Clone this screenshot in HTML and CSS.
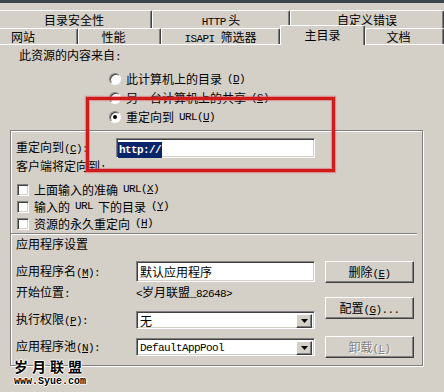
FILE: index.html
```html
<!DOCTYPE html>
<html lang="zh-CN">
  <head>
    <meta charset="UTF-8">
    <title>主目录</title>
    <link rel="stylesheet" href="styles.css">
  </head>
  <body>
    <div class="topbar"></div>

    <!-- two rows of property tabs, the front row holds the active one -->
    <div class="tabs">
      <div class="tab-row back">
        <div class="tab t-sec">目录安全性</div>
        <div class="tab t-http"><span class="en">HTTP</span> 头</div>
        <div class="tab t-err">自定义错误</div>
      </div>
      <div class="tab-row front">
        <div class="tab t-site">网站</div>
        <div class="tab t-perf">性能</div>
        <div class="tab t-isapi"><span class="en">ISAPI </span>筛选器</div>
        <div class="tab t-home active">主目录</div>
        <div class="tab t-doc">文档</div>
      </div>
    </div>

    <div class="panel">
      <div class="source">此资源的内容来自<span class="en">:</span></div>

      <div class="radios">
        <div class="radio-row"><span class="radio"></span>此计算机上的目录<span class="en">(<u>D</u>)</span></div>
        <div class="radio-row"><span class="radio"></span>另一台计算机上的共享<span class="en">(<u>S</u>)</span></div>
        <div class="radio-row"><span class="radio checked"></span>重定向到 <span class="en">URL(<u>U</u>)</span></div>
      </div>

      <div class="group">
        <div class="field-row">
          <label class="field-label">重定向到<span class="en">(<u>C</u>):</span></label>
          <div class="textbox url-box"><span class="selected en">http://</span></div>
        </div>
        <div class="note">客户端将定向到<span class="en">:</span></div>

        <div class="checks">
          <div class="check-row"><span class="checkbox"></span>上面输入的准确 <span class="en">URL(<u>X</u>)</span></div>
          <div class="check-row"><span class="checkbox"></span>输入的 <span class="en">URL</span> 下的目录<span class="en">(<u>Y</u>)</span></div>
          <div class="check-row"><span class="checkbox"></span>资源的永久重定向<span class="en">(<u>H</u>)</span></div>
        </div>

        <div class="divider"></div>
        <div class="section-title">应用程序设置</div>

        <div class="app">
          <div class="app-fields">
            <div class="app-row r-name">
              <span class="app-label">应用程序名<span class="en">(<u>M</u>):</span></span>
              <div class="textbox name-box">默认应用程序</div>
            </div>
            <div class="app-row r-start">
              <span class="app-label">开始位置<span class="en">:</span></span>
              <span class="start-path"><span class="en">&lt;</span>岁月联盟<span class="en">_82648&gt;</span></span>
            </div>
            <div class="app-row r-perm">
              <span class="app-label">执行权限<span class="en">(<u>P</u>):</span></span>
              <div class="select">
                <span class="select-text">无</span>
                <span class="arrow"><svg width="7" height="4" viewBox="0 0 7 4"><polygon points="0,0 7,0 3.5,4" fill="#000"/></svg></span>
              </div>
            </div>
            <div class="app-row r-pool">
              <span class="app-label">应用程序池<span class="en">(<u>N</u>):</span></span>
              <div class="select">
                <span class="select-text en">DefaultAppPool</span>
                <span class="arrow"><svg width="7" height="4" viewBox="0 0 7 4"><polygon points="0,0 7,0 3.5,4" fill="#000"/></svg></span>
              </div>
            </div>
          </div>

          <div class="app-buttons">
            <div class="btn">删除<span class="en">(<u>E</u>)</span></div>
            <div class="btn b-config">配置<span class="en">(<u>G</u>)...</span></div>
            <div class="btn b-unload disabled">卸载<span class="en">(<u>L</u>)</span></div>
          </div>
        </div>
      </div>
    </div>

    <!-- annotation drawn over the screenshot -->
    <div class="highlight-box"></div>

    <div class="watermark">
      <div class="wm-name">岁月联盟</div>
      <div class="wm-url">www.Syue.com</div>
    </div>
  </body>
</html>
```

FILE: styles.css
```css
* { box-sizing: border-box; }

body {
	margin: 0;
	width: 444px;
	height: 392px;
	overflow: hidden;
	position: relative;
	background-color: #D4D0C8;
	color: #000;
	font-family: "Noto Sans CJK SC", sans-serif;
	font-size: 12px;
	line-height: 16px;
}

/* SimSun style half width latin */
.en {
	font-family: "Liberation Mono", monospace;
	font-size: 11px;
	letter-spacing: -0.6px;
}

u { text-underline-offset: 1px; }

.topbar {
	height: 3px;
	background-color: #3A4550;
}

/* ---- tabs ---- */

.tabs { padding-top: 7px; }

.tab-row { display: flex; }

.back {
	height: 18px;
	margin-left: -4px;
}

.front {
	height: 16px;
	margin-left: -16px;
}

.tab {
	flex: none;
	border-top: 1px solid #fff;
	border-left: 1px solid #fff;
	border-right: 1px solid #404040;
	border-radius: 2px 2px 0 0;
	box-shadow: inset -1px 0 #808080;
	background-color: #D4D0C8;
	text-align: center;
	white-space: nowrap;
}

.back .tab {
	height: 18px;
	line-height: 16px;
	padding-top: 1px;
}

.front .tab {
	height: 16px;
	line-height: 15px;
}

.t-sec { width: 156px; }
.t-http { width: 138px; }
.t-err { flex: 1; }

.t-site { width: 94px; padding-right: 16px; }
.t-perf { width: 83px; padding-right: 12px; }
.t-isapi { width: 119px; }
.t-home { width: 85px; }
.t-doc { flex: 1; padding-right: 12px; }

.front .tab.active {
	height: 20px;
	margin-top: -3px;
	line-height: 17px;
	position: relative;
	z-index: 1;
}

/* ---- page ---- */

.panel {
	border-top: 1px solid #fff;
	padding-top: 2px;
}

.source {
	margin-left: 19px;
	line-height: 15px;
}

.radios { margin: 4px 0 0 109px; }

.radio-row {
	display: flex;
	align-items: center;
	gap: 5px;
	height: 19px;
}

.radio {
	width: 12px;
	height: 12px;
	border-radius: 50%;
	border: 1px solid;
	border-color: #808080 #fff #fff #808080;
	background-color: #fff;
	box-shadow: inset 1px 1px #404040;
	display: flex;
	align-items: center;
	justify-content: center;
}

.radio.checked::after {
	content: "";
	width: 4px;
	height: 4px;
	border-radius: 50%;
	background-color: #000;
}

.group {
	margin: 4px 0 0 10px;
	width: 413px;
	height: 236px;
	border: 1px solid #808080;
	box-shadow: inset 1px 1px #fff, 1px 1px #fff;
	padding: 7px 5px 0 5px;
}

.field-row {
	display: flex;
	align-items: center;
	height: 20px;
}

.field-label { width: 100px; }

/* sunken edit box */
.textbox,
.select {
	background-color: #fff;
	border: 1px solid;
	border-color: #808080 #fff #fff #808080;
	box-shadow: inset 1px 1px #404040, inset -1px -1px #D4D0C8;
}

.url-box {
	width: 199px;
	height: 20px;
	padding: 1px 0 0 1px;
}

.selected {
	display: inline-block;
	height: 16px;
	line-height: 16px;
	padding: 0 1px;
	background-color: #0A246A;
	color: #fff;
	font-weight: bold;
}

.note { line-height: 16px; }

.checks { margin-top: 5px; }

.check-row {
	display: flex;
	align-items: center;
	gap: 5px;
	height: 17px;
	line-height: 17px;
	padding-left: 1px;
}

.checkbox {
	width: 12px;
	height: 12px;
	background-color: #fff;
	border: 1px solid;
	border-color: #808080 #fff #fff #808080;
	box-shadow: inset 1px 1px #404040, inset -1px -1px #D4D0C8;
}

.divider {
	margin: 1px 0 0 -5px;
	border-top: 1px solid #808080;
	border-bottom: 1px solid #fff;
}

.section-title { line-height: 18px; }

.app {
	display: flex;
	margin-top: 8px;
}

.app-fields {
	display: flex;
	flex-direction: column;
}

.app-row {
	display: flex;
	align-items: center;
}

.app-label { width: 120px; }

.r-name { height: 21px; }
.r-start { height: 16px; margin-top: 3px; }
.r-perm { height: 18px; margin-top: 10px; }
.r-pool { height: 18px; margin-top: 9px; }

.name-box {
	width: 179px;
	height: 21px;
	padding: 1px 0 0 3px;
	line-height: 17px;
}

.select {
	width: 179px;
	height: 18px;
	display: flex;
	padding: 2px 2px 2px 3px;
}

.select-text {
	flex: 1;
	line-height: 14px;
}

.arrow {
	width: 16px;
	height: 14px;
	background-color: #D4D0C8;
	border: 1px solid;
	border-color: #fff #404040 #404040 #fff;
	box-shadow: inset -1px -1px #808080;
	display: flex;
	align-items: center;
	justify-content: center;
}

.app-buttons {
	display: flex;
	flex-direction: column;
	margin-left: 10px;
}

.btn {
	width: 89px;
	height: 22px;
	line-height: 19px;
	text-align: center;
	border: 1px solid;
	border-color: #fff #404040 #404040 #fff;
	box-shadow: inset -1px -1px #808080;
}

.b-config { margin-top: 14px; }
.b-unload { margin-top: 17px; }

.btn.disabled {
	color: #808080;
	text-shadow: 1px 1px #fff;
}

/* red annotation frame over the dialog */
.highlight-box {
	position: absolute;
	left: 86px;
	top: 97px;
	width: 249px;
	height: 75px;
	border: 3px solid #CF1B1B;
	box-shadow: 0 0 1px 1px rgba(225, 80, 80, 0.5), inset 0 0 1px 1px rgba(225, 80, 80, 0.5);
}

.watermark {
	position: absolute;
	left: 14px;
	top: 359px;
}

.wm-name {
	font-weight: bold;
	font-size: 14px;
	line-height: 15px;
	letter-spacing: 4px;
	text-shadow: 1px 0 #fff, -1px 0 #fff, 0 1px #fff, 0 -1px #fff;
}

.wm-url {
	margin-top: 3px;
	font-family: "Liberation Mono", monospace;
	font-weight: bold;
	font-size: 10px;
	line-height: 9px;
	text-shadow: 1px 0 #fff, -1px 0 #fff, 0 1px #fff, 0 -1px #fff;
}
```
